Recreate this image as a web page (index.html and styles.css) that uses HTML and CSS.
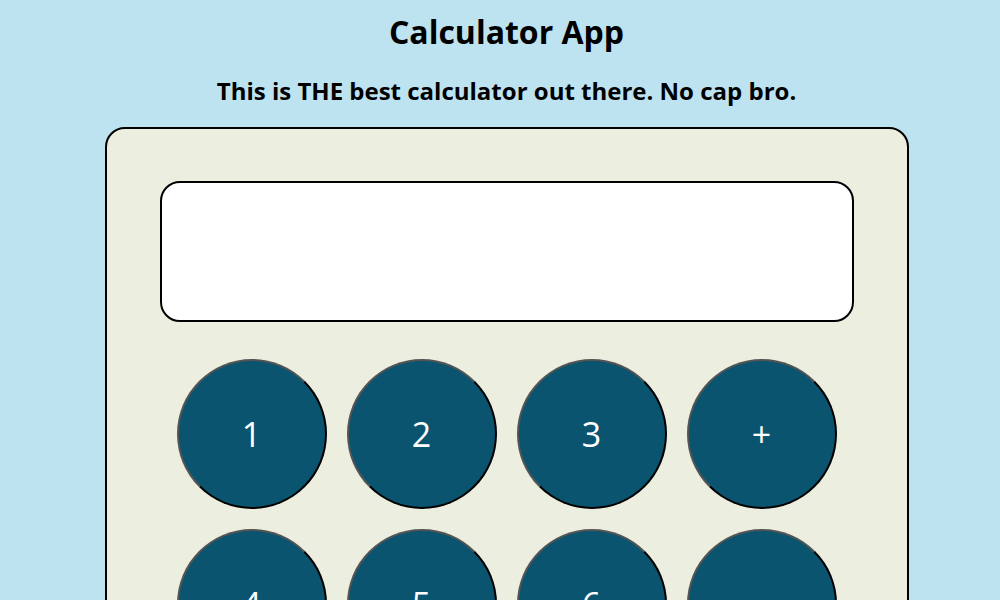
FILE: index.html
```html
<!DOCTYPE html>
<html>
<head>
<meta charset="utf-8">
<title>Calculator App</title>
<link rel="stylesheet" href="styles.css">
</head>
<body>
<h1 class="title">Calculator App</h1>
<h3 class="subtitle">This is THE best calculator out there. No cap bro.</h3>
<div class="calculator">
  <div class="display"></div>
  <div class="keys">
    <button class="key">1</button>
    <button class="key">2</button>
    <button class="key">3</button>
    <button class="key">+</button>
    <button class="key">4</button>
    <button class="key">5</button>
    <button class="key">6</button>
    <button class="key">-</button>
  </div>
</div>
</body>
</html>
```
FILE: styles.css
```css
html, body {
  background: #bde2f0;
}
body {
  margin: 0 0 0 13px;
  font-family: "Open Sans", sans-serif;
  color: #000;
}
.title {
  margin: 10px 0 0;
  text-align: center;
  font-size: 32px;
  font-weight: 700;
  line-height: 44px;
}
.subtitle {
  margin: 21px 0 0;
  text-align: center;
  font-size: 24px;
  font-weight: 700;
  line-height: 32px;
}
.calculator {
  width: 800px;
  margin: 20px auto 0;
  background: #ecefe0;
  border: 2px solid #000;
  border-radius: 20px;
  padding: 52px 0 40px;
  height: 600px;
  box-sizing: content-box;
}
.display {
  width: 690px;
  height: 137px;
  margin: 0 auto;
  background: #fff;
  border: 2px solid #000;
  border-radius: 20px;
}
.keys {
  width: 660px;
  margin: 37px auto 0;
  display: grid;
  grid-template-columns: repeat(4, 150px);
  gap: 20px;
}
.key {
  width: 150px;
  height: 150px;
  border-radius: 50%;
  background: #0a5470;
  color: #fff;
  border: 2px outset #000;
  font-family: "Open Sans", sans-serif;
  font-size: 34px;
  padding: 0;
}
```
